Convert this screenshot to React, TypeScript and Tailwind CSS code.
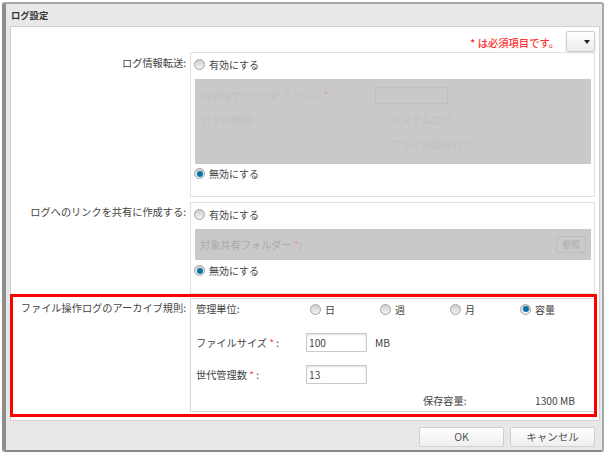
import React from "react";

const Radio = ({ checked }: { checked?: boolean }) => (
  <span className="-ml-[1px] flex h-[11px] w-[11px] shrink-0 items-center justify-center rounded-full border border-[#a3a3a3] bg-gradient-to-b from-[#cfcfcf] to-[#f2f2f2]">
    {checked && <span className="h-[6px] w-[6px] rounded-full bg-[#0b72a8]" />}
  </span>
);

const RadioLabel = ({ label, checked }: { label: string; checked?: boolean }) => (
  <div className="flex items-center gap-[4px] text-[10px] text-[#444]">
    <Radio checked={checked} />
    <span>{label}</span>
  </div>
);

const Star = () => <span className="text-[#f44]"> *</span>;
const PaleStar = () => <span className="text-[#e39c9c]"> *</span>;

const App = () => {
  return (
    <div
      className="h-[455px] w-[608px] overflow-hidden bg-white pl-[2px] pt-[2px]"
      style={{ fontFamily: '"Noto Sans CJK JP", "Liberation Sans", sans-serif' }}
    >
      <div className="flex h-[450px] w-[602px] flex-col rounded-[3px] border-2 border-l-[4px] border-[#a9a9a9] border-b-[#8a8a8a] border-l-[#8e8e8e] bg-[#e8e8e8]">
        <div className="flex h-[22px] shrink-0 items-center pl-[5px] pt-[1px] text-[9.3px] font-bold text-[#333]">ログ設定</div>

        {/* body */}
        <div className="relative ml-[4px] mr-[2px] flex h-[395px] shrink-0 flex-col border border-[#d5cfcf] bg-white">
          <div className="flex h-[25px] shrink-0 items-end justify-end pr-[4px]">
            <span className="mb-[2px] mr-[7px] text-[10.3px] font-medium text-[#f33]">* は必須項目です。</span>
            <button className="flex h-[21px] w-[29px] items-center justify-end rounded-[2px] border border-[#ccc] bg-gradient-to-b from-white to-[#ececec] pr-[4px] shadow-sm">
              <svg width="6" height="4" viewBox="0 0 6 4"><path d="M0 0h6L3 4z" fill="#222" /></svg>
            </button>
          </div>

          {/* ログ情報転送 */}
          <div className="flex h-[145px] shrink-0">
            <div className="w-[179px] shrink-0 pt-[3px] pr-[4px] text-right text-[10.2px] text-[#444]">ログ情報転送:</div>
            <div className="flex w-[405px] flex-col border border-[#e2e2e2] px-[4px] pt-[4px]">
              <RadioLabel label="有効にする" />
              <div className="mt-[7px] flex h-[85px] w-[396px] flex-col bg-[#c9c9c9] pl-[6px] pt-[7px] text-[10.2px] text-[#c0c0c0]">
                <div className="flex h-[18px] items-center">
                  <span className="w-[170px] whitespace-nowrap">syslogサーバーIPアドレス<PaleStar />:</span>
                  <span className="ml-[4px] h-[17px] w-[73px] border border-[#c0c0c0]" />
                </div>
                <div className="mt-[8px] flex">
                  <span className="w-[190px]">ログの種類:</span>
                  <div className="flex flex-col gap-[10px]">
                    <span>システムログ</span>
                    <span>ファイル操作ログ</span>
                  </div>
                </div>
              </div>
              <div className="mt-[2px]"><RadioLabel label="無効にする" checked /></div>
            </div>
          </div>

          {/* リンク共有 */}
          <div className="mt-[5px] flex h-[92px] shrink-0">
            <div className="w-[179px] shrink-0 whitespace-nowrap pt-[2px] pr-[4px] text-right text-[10.2px] text-[#444]">ログへのリンクを共有に作成する:</div>
            <div className="flex w-[405px] flex-col border border-[#e2e2e2] px-[4px] pt-[4px]">
              <RadioLabel label="有効にする" />
              <div className="mt-[7px] flex h-[31px] w-[396px] items-center justify-between bg-[#c9c9c9] pl-[5px] pr-[5px] text-[10.2px] text-[#a9a9a9]">
                <span>対象共有フォルダー<PaleStar />:</span>
                <span className="flex h-[17px] w-[30px] items-center justify-center rounded-[2px] border border-[#bdbdbd] text-[9px]">参照</span>
              </div>
              <div className="mt-[3px]"><RadioLabel label="無効にする" checked /></div>
            </div>
          </div>

          {/* アーカイブ規則 */}
          <div className="mt-[4px] flex h-[114px] shrink-0">
            <div className="w-[179px] shrink-0 whitespace-nowrap pt-[2px] pr-[4px] text-right text-[10.2px] text-[#444]">ファイル操作ログのアーカイブ規則:</div>
            <div className="flex w-[405px] flex-col border border-[#d8d8d8] pl-[5px] text-[10.2px] text-[#444]">
              <div className="flex h-[20px] items-center">
                <span className="w-[115px]">管理単位:</span>
                <div className="w-[70px]"><RadioLabel label="日" /></div>
                <div className="w-[70px]"><RadioLabel label="週" /></div>
                <div className="w-[70px]"><RadioLabel label="月" /></div>
                <RadioLabel label="容量" checked />
              </div>
              <div className="mt-[14px] flex h-[19px] items-center">
                <span className="w-[110px]">ファイルサイズ<Star /> :</span>
                <span className="flex h-[19px] w-[61px] items-center border border-[#c5ccd6] pl-[2px] shadow-[inset_0_1px_2px_#ddd]">100</span>
                <span className="ml-[8px]">MB</span>
              </div>
              <div className="mt-[13px] flex h-[19px] items-center">
                <span className="w-[110px]">世代管理数<Star /> :</span>
                <span className="flex h-[19px] w-[61px] items-center border border-[#c5ccd6] pl-[2px] shadow-[inset_0_1px_2px_#ddd]">13</span>
              </div>
              <div className="mt-[9px] flex items-center">
                <span className="ml-[227px] w-[112px]">保存容量:</span>
                <span>1300 MB</span>
              </div>
            </div>
          </div>

          {/* highlight */}
          <div className="absolute -left-[1px] top-[267px] h-[123px] w-[587px] border-[3px] border-[#f00]" />
        </div>

        <div className="flex flex-1 items-start justify-end gap-[6px] pr-[7px] pt-[6px]">
          <button className="h-[20px] w-[85px] rounded-[2px] border border-[#d0d0d0] bg-gradient-to-b from-white to-[#eee] text-[10.5px] text-[#555]">OK</button>
          <button className="h-[20px] w-[85px] rounded-[2px] border border-[#d0d0d0] bg-gradient-to-b from-white to-[#eee] text-[10.5px] text-[#555]">キャンセル</button>
        </div>
      </div>
    </div>
  );
};

export default App;
